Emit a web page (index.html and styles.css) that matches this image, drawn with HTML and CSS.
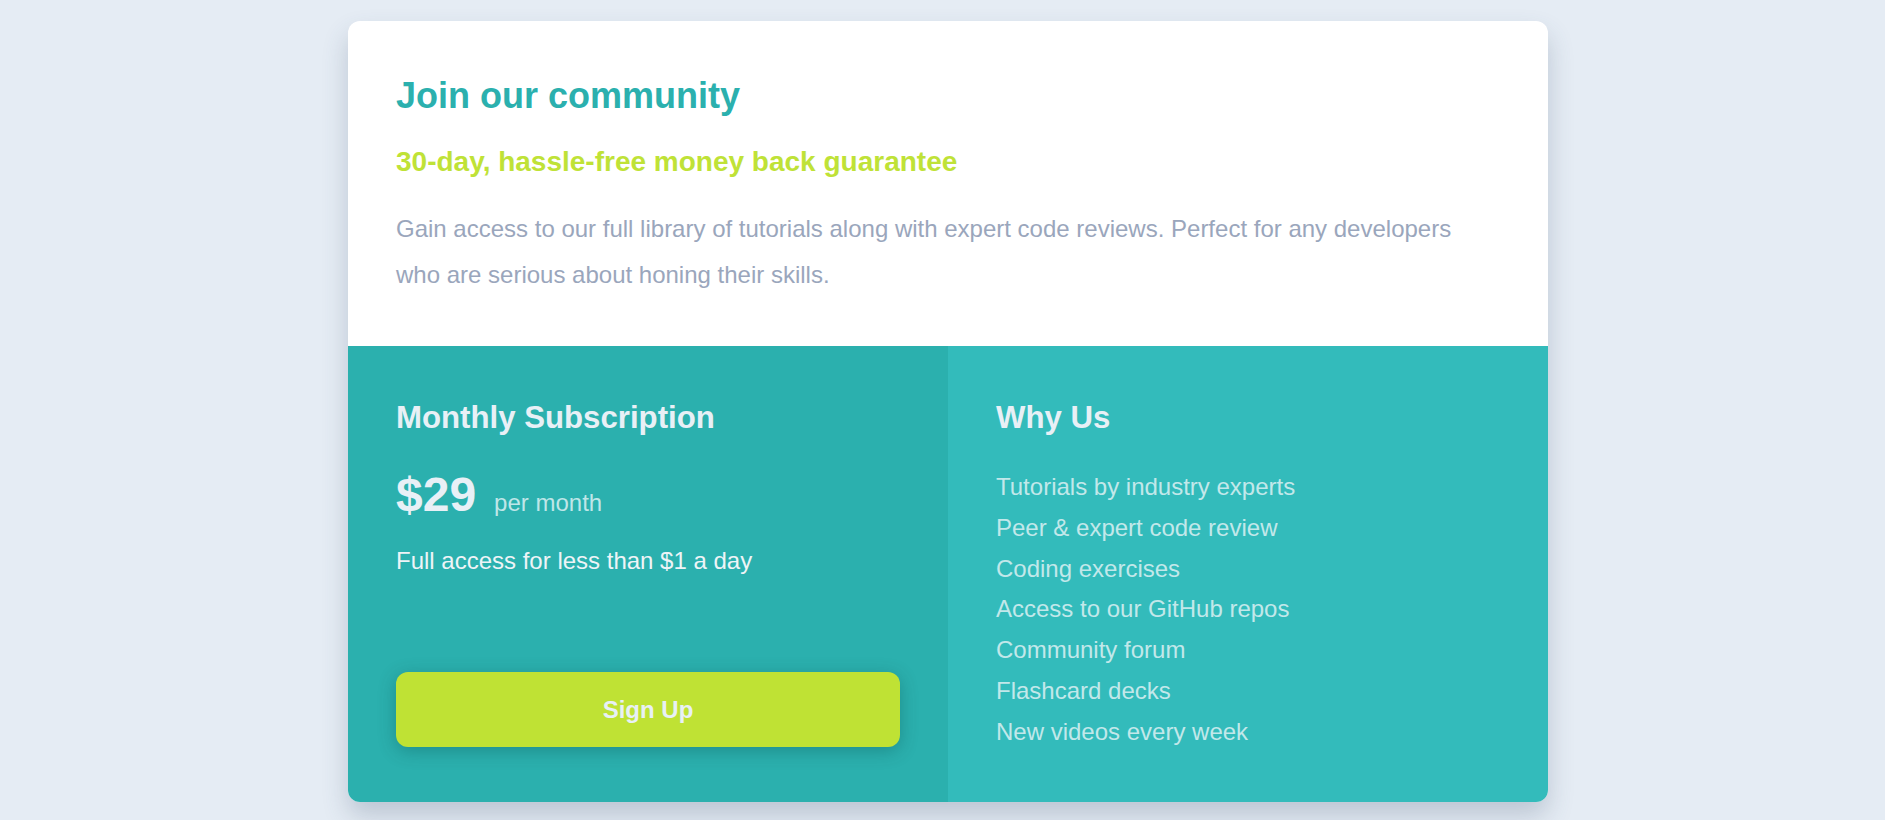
FILE: index.html
```html
<!DOCTYPE html>
<html lang="en">
<head>
<meta charset="utf-8">
<title>Single price grid</title>
<link rel="stylesheet" href="styles.css">
</head>
<body>
<main class="page">
  <article class="card">
    <section class="intro">
      <h1 class="intro-title">Join our community</h1>
      <h2 class="intro-sub">30-day, hassle-free money back guarantee</h2>
      <p class="intro-text">Gain access to our full library of tutorials along with expert code reviews. Perfect for any developers who are serious about honing their skills.</p>
    </section>
    <div class="bottom">
      <section class="plan">
        <h3 class="col-title">Monthly Subscription</h3>
        <div class="price-row">
          <span class="price">$29</span>
          <span class="period">per month</span>
        </div>
        <p class="plan-note">Full access for less than $1 a day</p>
        <button class="signup" type="button">Sign Up</button>
      </section>
      <section class="why">
        <h3 class="col-title">Why Us</h3>
        <ul class="why-list">
          <li>Tutorials by industry experts</li>
          <li>Peer &amp; expert code review</li>
          <li>Coding exercises</li>
          <li>Access to our GitHub repos</li>
          <li>Community forum</li>
          <li>Flashcard decks</li>
          <li>New videos every week</li>
        </ul>
      </section>
    </div>
  </article>
</main>
</body>
</html>
```

FILE: styles.css
```css
* { box-sizing: border-box; }

html, body {
  margin: 0;
  padding: 0;
}

body {
  background: #e5ecf4;
  font-family: "Liberation Sans", Arial, sans-serif;
  min-height: 820px;
}

.page {
  display: flex;
  justify-content: center;
  padding: 21px 0 0 11px;
}

.card {
  width: 1200px;
  border-radius: 12px;
  overflow: hidden;
  background: #ffffff;
  box-shadow: 0 14px 26px rgba(60, 80, 110, 0.24);
}

.intro {
  padding: 53px 48px 48px;
}

.intro-title {
  margin: 0;
  font-size: 36px;
  line-height: 43px;
  font-weight: 700;
  color: #2bb0ae;
}

.intro-sub {
  margin: 28px 0 0;
  font-size: 28px;
  line-height: 34px;
  font-weight: 700;
  color: #bfe237;
}

.intro-text {
  margin: 27px 0 0;
  font-size: 24px;
  line-height: 46px;
  color: #9aa6bc;
}

.bottom {
  display: flex;
  height: 456px;
}

.plan {
  flex: 1 1 0;
  background: #2bb0ae;
  padding: 48px 48px 55px;
  display: flex;
  flex-direction: column;
  color: #e8f0f6;
}

.why {
  flex: 1 1 0;
  background: #33bbbb;
  padding: 48px;
  color: #e8f0f6;
}

.col-title {
  margin: 0;
  font-size: 31.2px;
  line-height: 48px;
  font-weight: 700;
  color: #e8f0f6;
}

.price-row {
  display: flex;
  align-items: baseline;
  gap: 18px;
  margin-top: 24px;
  line-height: 58px;
}

.price {
  font-size: 48px;
  font-weight: 700;
  color: #e8f0f6;
}

.period {
  font-size: 24px;
  color: #bfe6e8;
}

.plan-note {
  margin: 8px 0 0;
  font-size: 24px;
  line-height: 41px;
  color: #eef4f7;
}

.signup {
  margin-top: auto;
  height: 75px;
  width: 100%;
  border: none;
  border-radius: 12px;
  background: #bfe234;
  color: #e8f0f6;
  font-family: "Liberation Sans", Arial, sans-serif;
  font-size: 24px;
  font-weight: 700;
  box-shadow: 0 4px 18px rgba(0, 60, 60, 0.3);
  cursor: pointer;
}

.why-list {
  list-style: none;
  margin: 25px 0 0;
  padding: 0;
}

.why-list li {
  font-size: 24px;
  line-height: 40.8px;
  color: #c2e8ea;
}
```
